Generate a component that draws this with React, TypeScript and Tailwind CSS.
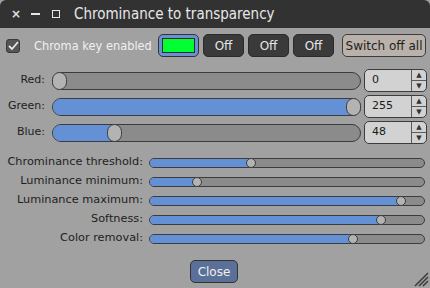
import React from 'react';

const FONT = { fontFamily: '"DejaVu Sans", Verdana, sans-serif' };
const COND = { fontFamily: '"DejaVu Sans Condensed", "DejaVu Sans", sans-serif' };

function BigSlider({ value }: { value: number }) {
  // track 309px wide, handle 15px
  const pos = Math.round((value / 255) * (309 - 15));
  return (
    <div className="relative w-[309px] h-[18px]">
      <div className="absolute inset-0 rounded-full border border-[#3c3c3c] bg-[#8b8b8b] overflow-hidden">
        <div className="h-full bg-[#6490d6]" style={{ width: pos + 7 }} />
      </div>
      <div
        className="absolute top-0 w-[15px] h-[18px] rounded-full border border-[#3c3c3c] bg-[#b3b3b3]"
        style={{ left: pos }}
      />
    </div>
  );
}

function SmallSlider({ frac }: { frac: number }) {
  const pos = Math.round(frac * (276 - 10));
  return (
    <div className="relative w-[276px] h-[10px]">
      <div className="absolute inset-0 rounded-full border border-[#3c3c3c] bg-[#8b8b8b] overflow-hidden">
        <div className="h-full bg-[#6490d6]" style={{ width: pos + 5 }} />
      </div>
      <div
        className="absolute top-0 w-[10px] h-[10px] rounded-full border border-[#3c3c3c] bg-[#b3b3b3]"
        style={{ left: pos }}
      />
    </div>
  );
}

function SpinBox({ value }: { value: number }) {
  return (
    <div className="flex w-[63px] h-[23px] rounded-[5px] border border-[#3c3c3c] bg-[#d2d2d2] overflow-hidden">
      <div className="flex-1 flex items-center pl-[7px] text-[11px] text-[#1a1a1a]">{value}</div>
      <div className="w-[15px] flex flex-col border-l border-[#5a5a5a]">
        <div className="flex-1 flex items-center justify-center text-[7px] leading-none text-[#333] border-b border-[#5a5a5a]">▲</div>
        <div className="flex-1 flex items-center justify-center text-[7px] leading-none text-[#333]">▼</div>
      </div>
    </div>
  );
}

function OffButton() {
  return (
    <div className="w-[41px] h-[23px] shrink-0 rounded-[5px] bg-[#3a3a3a] border border-[#2a2a2a] flex items-center justify-center text-[12px] text-[#e6e6e6]">
      Off
    </div>
  );
}

export default function App() {
  const big = [
    { label: 'Red:', value: 0 },
    { label: 'Green:', value: 255 },
    { label: 'Blue:', value: 48 },
  ];
  const small = [
    { label: 'Chrominance threshold:', frac: 0.365 },
    { label: 'Luminance minimum:', frac: 0.162 },
    { label: 'Luminance maximum:', frac: 0.929 },
    { label: 'Softness:', frac: 0.853 },
    { label: 'Color removal:', frac: 0.748 },
  ];

  return (
    <div className="w-[430px] h-[288px] bg-[#a1a1a1] flex flex-col relative overflow-hidden" style={FONT}>
      {/* title bar */}
      <div className="h-[28px] bg-[#323232] rounded-t-[6px] flex items-center shrink-0">
        <span className="w-[8px] ml-[11px] text-[12px] leading-none text-[#e0e0e0] font-bold">×</span>
        <div className="w-[9px] h-[2px] bg-[#e6e6e6] ml-[12px]" />
        <div className="w-[8px] h-[8px] border-[1.5px] border-[#e6e6e6] ml-[12px]" />
        <span className="ml-[14px] text-[15px] text-[#e8e8e8] whitespace-nowrap" style={COND}>
          Chrominance to transparency
        </span>
      </div>

      {/* chroma key row */}
      <div className="flex items-center h-[23px] mt-[6px] pl-[6px]">
        <div className="w-[14px] h-[14px] shrink-0 rounded-[3px] bg-[#555] border border-[#3a3a3a] flex items-center justify-center">
          <svg width="12" height="12" viewBox="0 0 12 12">
            <path d="M2 6 L5 9 L11 2" stroke="#e8e8e8" strokeWidth="1.8" fill="none" />
          </svg>
        </div>
        <span className="ml-[14px] w-[118px] shrink-0 whitespace-nowrap text-[12.7px] text-[#f0f0f0]" style={COND}>
          Chroma key enabled
        </span>
        <div className="ml-[6px] w-[41px] h-[23px] shrink-0 rounded-[5px] border border-[#333] bg-[#6a8fd2] p-[3px]">
          <div className="w-full h-full bg-[#00ff33] border border-[#2c2c2c]" />
        </div>
        <div className="flex gap-[4px] ml-[4px]">
          <OffButton />
          <OffButton />
          <OffButton />
        </div>
        <div className="ml-[8px] w-[84px] h-[23px] shrink-0 rounded-[5px] bg-[#b9b1aa] border border-[#3c3c3c] flex items-center justify-center text-[12px] text-[#1e1e1e] whitespace-nowrap">
          Switch off all
        </div>
      </div>

      {/* RGB sliders */}
      <div className="flex flex-col gap-[3px] mt-[12px]">
        {big.map((r) => (
          <div key={r.label} className="flex items-center h-[23px]">
            <span className="w-[45px] text-right text-[11px] text-[#1e1e1e]">{r.label}</span>
            <div className="ml-[7px]">
              <BigSlider value={r.value} />
            </div>
            <div className="ml-[3px]">
              <SpinBox value={r.value} />
            </div>
          </div>
        ))}
      </div>

      {/* small sliders */}
      <div className="flex flex-col mt-[9px]">
        {small.map((r) => (
          <div key={r.label} className="flex items-center h-[19px]">
            <span className="w-[143px] text-right text-[11.3px] text-[#1e1e1e] whitespace-nowrap">{r.label}</span>
            <div className="ml-[6px]">
              <SmallSlider frac={r.frac} />
            </div>
          </div>
        ))}
      </div>

      <div className="flex justify-center mt-[12px] pr-[2px]">
        <div className="w-[48px] h-[23px] rounded-[5px] bg-[#5a7098] border border-[#333] flex items-center justify-center text-[12px] text-[#f0f0f0]">
          Close
        </div>
      </div>

      {/* resize grip */}
      <svg className="absolute right-[1px] bottom-[1px]" width="15" height="15" viewBox="0 0 15 15">
        <path d="M14 1 L1 14 M14 5 L5 14 M14 9 L9 14" stroke="#3a3a3a" strokeWidth="1.5" />
      </svg>
    </div>
  );
}
